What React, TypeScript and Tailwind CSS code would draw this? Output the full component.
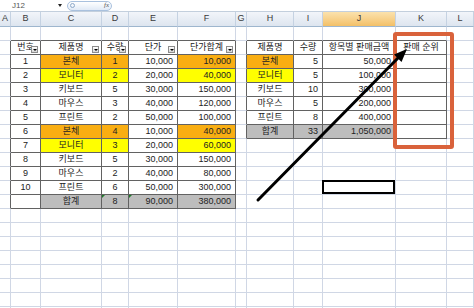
import React from 'react';

const COLS = ['A', 'B', 'C', 'D', 'E', 'F', 'G', 'H', 'I', 'J', 'K', 'L'];
const GRID = 'grid grid-cols-[11px_30px_61px_27px_49px_58px_11px_47px_29px_73px_51px_27px]';

const OR = 'bg-[#f9ae12]';
const YE = 'bg-[#ffff00]';
const GY = 'bg-[#bdbdbd]';

type Cell = { t?: string; a?: 'c' | 'r'; bg?: string; filter?: boolean; mark?: boolean };

// 번호, 제품명, 수량, 단가, 단가합계, highlight
const t1 = [
  ['1', '본체', '1', '10,000', '10,000', 'o'],
  ['2', '모니터', '2', '20,000', '40,000', 'y'],
  ['3', '키보드', '5', '30,000', '150,000'],
  ['4', '마우스', '3', '40,000', '120,000'],
  ['5', '프린트', '2', '50,000', '100,000'],
  ['6', '본체', '4', '10,000', '40,000', 'o'],
  ['7', '모니터', '3', '20,000', '60,000', 'y'],
  ['8', '키보드', '5', '30,000', '150,000'],
  ['9', '마우스', '2', '40,000', '80,000'],
  ['10', '프린트', '6', '50,000', '300,000'],
];

const t2 = [
  ['본체', '5', '50,000', 'o'],
  ['모니터', '5', '100,000', 'y'],
  ['키보드', '10', '300,000'],
  ['마우스', '5', '200,000'],
  ['프린트', '8', '400,000'],
];

function inTable(r: number, c: number) {
  return (r >= 2 && r <= 13 && c >= 1 && c <= 5) || (r >= 2 && r <= 8 && c >= 7 && c <= 10);
}

function cellAt(r: number, c: number): Cell {
  if (r === 2 && c >= 1 && c <= 5) {
    return { t: ['번호', '제품명', '수량', '단가', '단가합계'][c - 1], a: 'c', filter: true };
  }
  if (r >= 3 && r <= 12 && c >= 1 && c <= 5) {
    const row = t1[r - 3];
    const hl = row[5] === 'o' ? OR : row[5] === 'y' ? YE : undefined;
    const i = c - 1;
    return { t: row[i], a: i >= 3 ? 'r' : 'c', bg: i === 1 || i === 2 || i === 4 ? hl : undefined };
  }
  if (r === 13 && c >= 1 && c <= 5) {
    const vals = ['', '합계', '8', '90,000', '380,000'];
    const i = c - 1;
    return { t: vals[i], a: i >= 3 ? 'r' : 'c', bg: i > 0 ? GY : undefined, mark: i === 2 || i === 3 };
  }
  if (r === 2 && c >= 7 && c <= 10) {
    return { t: ['제품명', '수량', '항목별 판매금액', '판매 순위'][c - 7], a: 'c' };
  }
  if (r >= 3 && r <= 7 && c >= 7 && c <= 10) {
    const row = t2[r - 3];
    const hl = row[3] === 'o' ? OR : row[3] === 'y' ? YE : undefined;
    const i = c - 7;
    if (i === 3) return {};
    return { t: row[i], a: i === 0 ? 'c' : 'r', bg: i === 0 ? hl : undefined };
  }
  if (r === 8 && c >= 7 && c <= 9) {
    const i = c - 7;
    return { t: ['합계', '33', '1,050,000'][i], a: i === 0 ? 'c' : 'r', bg: GY };
  }
  return {};
}

function FilterBtn() {
  return (
    <span className="absolute right-[2px] bottom-[1px] flex h-[7px] w-[7px] items-center justify-center border border-[#8c8c8c] bg-linear-to-b from-white to-[#d6d6d6]">
      <span className="h-0 w-0 border-x-[2px] border-t-[2px] border-x-transparent border-t-black" />
    </span>
  );
}

function SheetCell({ r, c }: { r: number; c: number }) {
  const cell = cellAt(r, c);
  const rightDark = inTable(r, c) || inTable(r, c + 1);
  const bottomDark = inTable(r, c) || inTable(r + 1, c);
  const selected = r === 12 && c === 9;
  return (
    <div
      className={`relative flex items-center whitespace-nowrap border-r border-b leading-none ${
        rightDark ? 'border-r-[#626262]' : 'border-r-[#d0d7e5]'
      } ${bottomDark ? 'border-b-[#626262]' : 'border-b-[#d0d7e5]'} ${cell.bg ?? 'bg-white'} ${
        cell.a === 'r' ? 'justify-end pr-[4px]' : 'justify-center'
      }`}
    >
      {cell.t}
      {cell.filter && <FilterBtn />}
      {cell.mark && (
        <span className="absolute left-0 top-0 h-0 w-0 border-t-[3px] border-r-[3px] border-t-[#1f7a2a] border-r-transparent" />
      )}
      {selected && <span className="absolute -left-px -top-px bottom-0 right-0 border-2 border-black" />}
    </div>
  );
}

export default function App() {
  const rows = Array.from({ length: 21 }, (_, i) => i + 1);
  return (
    <div className="relative h-[308px] w-[474px] overflow-hidden bg-white font-[family-name:'Liberation_Sans','Noto_Sans_CJK_KR',sans-serif] text-[9px] text-[#222]">
      {/* formula bar */}
      <div className="flex h-[12px] items-center border-b border-[#c3cfdd] bg-white">
        <div className="w-[57px] pl-[12px] text-[8px] text-[#555]">J12</div>
        <span className="ml-[1px] h-0 w-0 border-x-[2px] border-t-[3px] border-x-transparent border-t-[#222]" />
        <div className="ml-[5px] flex h-[10px] w-[45px] items-center justify-between rounded-full border border-[#a9c1de] bg-linear-to-b from-white to-[#e1eaf6] px-[2px]">
          <span className="h-[5px] w-[5px] rounded-full border border-[#8ea9ca]" />
          <span className="font-[family-name:'Liberation_Serif',serif] text-[7px] italic text-[#555]">fx</span>
        </div>
      </div>

      {/* column headers */}
      <div className={`${GRID} h-[15px]`}>
        {COLS.map((l) => (
          <div
            key={l}
            className={`flex items-center justify-center border-r border-b border-r-[#c5d2e2] border-b-[#9eb6ce] text-[#3a3a3a] ${
              l === 'J' ? 'bg-linear-to-b from-[#fbe2ad] to-[#f3c067]' : 'bg-linear-to-b from-[#f2f5fa] to-[#dde5ef]'
            }`}
          >
            {l}
          </div>
        ))}
      </div>

      {rows.map((r) => (
        <div key={r} className={`${GRID} h-[14px]`}>
          {COLS.map((_, c) => (
            <SheetCell key={c} r={r} c={c} />
          ))}
        </div>
      ))}

      {/* red highlight box */}
      <div className="absolute left-[393px] top-[32px] h-[117px] w-[61px] rounded-[3px] border-4 border-[#d9623b]" />

      {/* arrow */}
      <svg className="pointer-events-none absolute left-0 top-0" width="474" height="308">
        <line x1="258" y1="200" x2="398" y2="58" stroke="#000" strokeWidth="3" strokeLinecap="round" />
        <polygon points="407,49 401.5,62 394,54.5" fill="#000" />
      </svg>
    </div>
  );
}
